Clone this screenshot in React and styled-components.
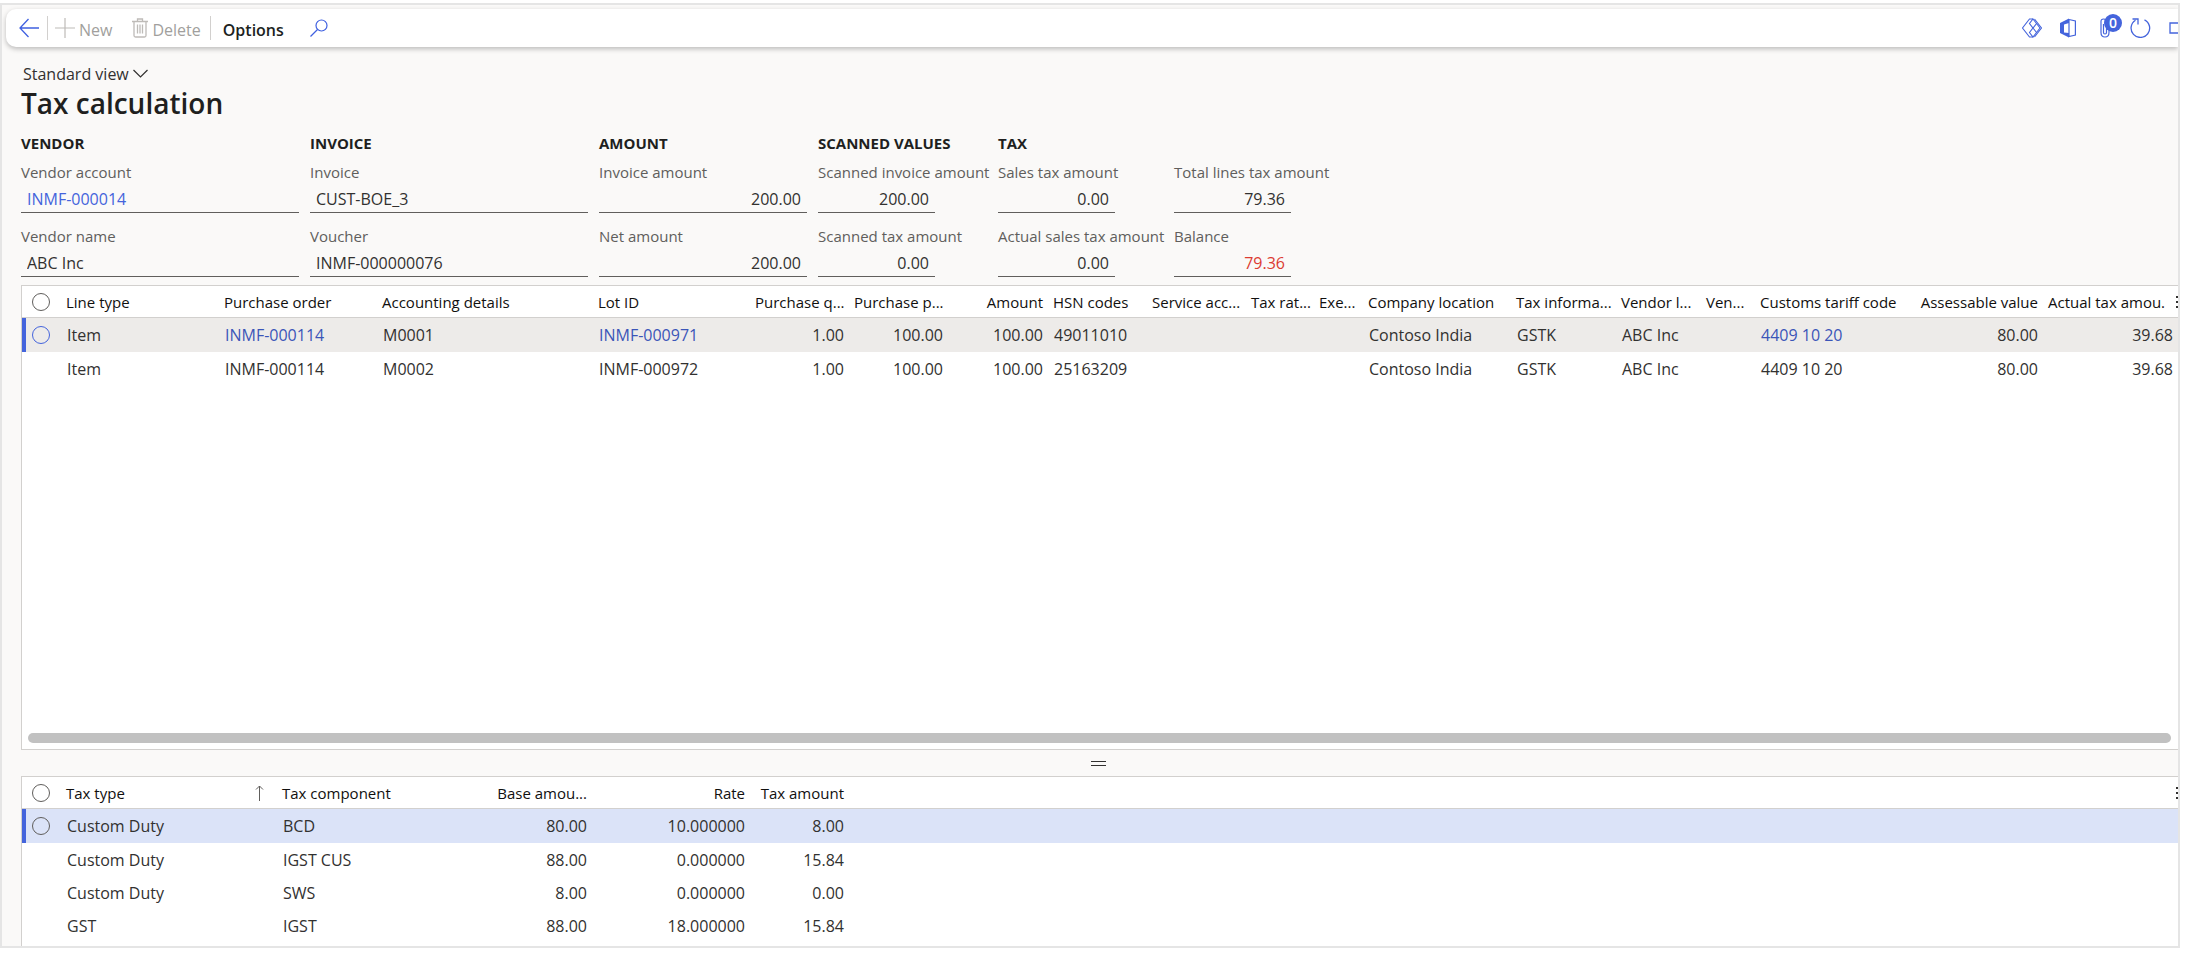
import { useState } from "react";
import styled, { createGlobalStyle, css } from "styled-components";

const GlobalStyle = createGlobalStyle`
  * {
    box-sizing: border-box;
  }

  html,
  body {
    margin: 0;
    background: #fff;
  }

  body,
  input,
  button {
    font-family: "Open Sans", "Noto Sans", sans-serif;
    font-size: 16px;
    color: #323130;
  }
`;

const Page = styled.div`
  height: 100vh;
  padding: 3px 6px 5px 0;
`;

const Frame = styled.div`
  display: flex;
  flex-direction: column;
  height: 100%;
  overflow: hidden;
  background: #faf9f8;
  border: 2px solid #e5e5e5;
`;

const Toolbar = styled.header`
  display: flex;
  align-items: center;
  justify-content: space-between;
  flex: none;
  height: 38px;
  margin: 4px 0 0 4px;
  padding-left: 12px;
  background: #fff;
  border-radius: 10px 0 0 10px;
  box-shadow: 0 2px 5px rgba(0, 0, 0, 0.25);
`;

const ToolbarGroup = styled.div`
  display: flex;
  align-items: center;
`;

const Divider = styled.span`
  width: 1px;
  height: 24px;
  background: #d2d0ce;
`;

const ToolButton = styled.button`
  display: flex;
  align-items: center;
  gap: 4px;
  height: 32px;
  padding: 4px ${(props) => props.$right || "6px"} 0
    ${(props) => props.$left || "6px"};
  border: 0;
  background: none;
  font-weight: ${(props) => (props.$strong ? 600 : 400)};
  color: ${(props) => (props.$strong ? "#201f1e" : "#3f60e0")};
  cursor: pointer;

  &:disabled {
    color: #a19f9d;
    cursor: default;
  }

  svg {
    display: block;
    flex: none;
    margin-bottom: 4px;
  }

  &:disabled svg {
    color: #bebbb8;
  }
`;

const StatusIcons = styled(ToolbarGroup)`
  gap: 18px;
`;

const IconButton = styled.button`
  position: relative;
  flex: none;
  padding: 0 ${(props) => (props.$badged ? "2px 0 6px" : "0")};
  border: 0;
  background: none;
  color: #4464dc;
  cursor: pointer;

  svg {
    display: block;
  }
`;

const Badge = styled.span`
  position: absolute;
  top: -4px;
  left: 10px;
  width: 18px;
  height: 18px;
  border-radius: 50%;
  background: #4464dc;
  color: #fff;
  font-size: 14px;
  font-weight: 600;
  line-height: 18px;
  text-align: center;
`;

const Content = styled.main`
  display: flex;
  flex: 1;
  flex-direction: column;
  min-height: 0;
  padding: 15px 0 0 19px;
`;

const ViewButton = styled.button`
  display: flex;
  align-items: center;
  align-self: flex-start;
  gap: 4px;
  height: 24px;
  padding: 0 2px;
  border: 0;
  background: none;
  cursor: pointer;
`;

const Title = styled.h1`
  margin: 0;
  font-size: 28px;
  font-weight: 600;
  line-height: 34px;
  color: #201f1e;
`;

const Summary = styled.div`
  display: flex;
  gap: 11px;
  margin-top: 12px;
`;

const Group = styled.section`
  flex: none;
  width: ${(props) => props.$width};
`;

const GroupTitle = styled.h2`
  margin: 0 0 7px;
  font-size: 15px;
  font-weight: 700;
  line-height: 22px;
  color: #201f1e;
`;

const Fields = styled.div`
  display: grid;
  grid-template-columns: ${(props) => (props.$split ? "165px 165px" : "100%")};
  column-gap: 11px;
  row-gap: 12px;
`;

const FieldBox = styled.div`
  display: flex;
  flex-direction: column;
  white-space: nowrap;
`;

const FieldLabel = styled.label`
  font-size: 15px;
  line-height: 22px;
  color: #605e5c;
`;

const FieldInput = styled.input`
  width: ${(props) => (props.$narrow ? "117px" : "100%")};
  height: 30px;
  padding: 2px 6px 0;
  border: 0;
  border-bottom: 1px solid #605e5c;
  background: none;
  text-align: ${(props) => (props.$right ? "right" : "left")};
  color: ${(props) => props.$color || "#323130"};
  outline: none;
`;

const GridPanel = styled.section`
  display: flex;
  flex-direction: column;
  flex: ${(props) => (props.$grow ? 1 : "none")};
  min-height: 0;
  margin-top: ${(props) => (props.$grow ? "8px" : "0")};
  padding-bottom: ${(props) => (props.$grow ? "0" : "4px")};
  overflow: hidden;
  background: #fff;
  border: 1px solid #d2d0ce;
  border-width: ${(props) => (props.$grow ? "1px 0 1px 1px" : "1px 0 0 1px")};
`;

const Table = styled.table`
  width: 100%;
  table-layout: fixed;
  border-collapse: separate;
  border-spacing: 0;
`;

const cell = css`
  padding: 0 5px;
  overflow: hidden;
  white-space: nowrap;
  text-align: ${(props) => (props.$right ? "right" : "left")};
`;

const HeadCell = styled.th`
  ${cell}
  height: 32px;
  border-bottom: 1px solid #d2d0ce;
  font-size: 15px;
  font-weight: 500;
  color: #11100f;
`;

const HeadInner = styled.div`
  display: flex;
  align-items: center;
  justify-content: space-between;
`;

const Cell = styled.td`
  ${cell}
  height: 33px;
  padding-left: 6px;

  a {
    color: #3b55b8;
    text-decoration: none;
  }
`;

const Row = styled.tr`
  height: ${(props) => (props.$fill ? "34px" : "33px")};
  background: ${(props) => props.$fill || "transparent"};

  td:first-child {
    box-shadow: ${(props) => (props.$fill ? "inset 4px 0 0 #4464dc" : "none")};
  }
`;

const SelectCell = styled.td`
  padding: 0 0 0 10px;
`;

const SelectHead = styled.th`
  padding: 0 0 0 10px;
  border-bottom: 1px solid #d2d0ce;
`;

const Round = styled.input`
  display: block;
  appearance: none;
  width: 18px;
  height: 18px;
  margin: 0;
  border: 1px solid ${(props) => props.$color || "#605e5c"};
  border-radius: 50%;

  &:checked {
    background: #4464dc;
  }
`;

const SortMark = styled.span`
  display: flex;
  margin-right: 8px;
`;

const MoreButton = styled.button`
  flex: none;
  width: 4px;
  height: 16px;
  margin: 0 -5px 0 auto;
  padding: 0;
  overflow: hidden;
  border: 0;
  background: none;

  svg {
    display: block;
  }
`;

const ScrollTrack = styled.div`
  margin: auto 7px 6px 6px;
`;

const ScrollThumb = styled.div`
  height: 10px;
  border-radius: 5px;
  background: #c1c1c1;
`;

const Splitter = styled.div`
  display: flex;
  align-items: center;
  justify-content: center;
  flex: none;
  height: 26px;
  padding-right: 3px;
`;

const SplitterHandle = styled.span`
  width: 15px;
  height: 5px;
  border: solid #323130;
  border-width: 1px 0;
`;

const BackIcon = () => (
  <svg width="20" height="20" fill="none" stroke="currentColor" strokeWidth="1.3">
    <path d="M9.5 1 1 10l8.5 9M1 10h19" />
  </svg>
);

const PlusIcon = () => (
  <svg width="20" height="20" fill="none" stroke="currentColor" strokeWidth="1.2">
    <path d="M10 0v20M0 10h20" />
  </svg>
);

const TrashIcon = () => (
  <svg width="16" height="20" fill="none" stroke="currentColor" strokeWidth="1.3">
    <path d="M0 3.5h16M5.5 3V1h5v2M2 3.5v14q0 1.5 1.5 1.5h9q1.5 0 1.5-1.5v-14M5.5 6.5v9M8 6.5v9M10.5 6.5v9" />
  </svg>
);

const SearchIcon = () => (
  <svg width="18" height="18" fill="none" stroke="currentColor" strokeWidth="1.2">
    <circle cx="11.5" cy="6.5" r="5.5" />
    <path d="M7.5 10.5.5 17.5" />
  </svg>
);

const ChevronIcon = () => (
  <svg width="15" height="10" fill="none" stroke="#323130" strokeWidth="1.2">
    <path d="m.5 1 7 7 7-7" />
  </svg>
);

const DiamondsIcon = () => (
  <svg width="20" height="20" fill="none" stroke="currentColor" strokeWidth="1.1">
    <path d="M11 1H7.5L.5 10l7 9H11M12.5 1l7 9-7 9" />
    <path d="m11 1 3.500 4.500L11 10 7.500 5.500ZM11 10l3.500 4.500L11 19l-3.500-4.500Z" />
    <path d="m14.500 5.500 3.500 4.500-3.500 4.500" />
  </svg>
);

const OfficeIcon = () => (
  <svg width="16" height="20">
    <path d="M0 5 9 .5V5L4 6.5v8L9 15v4.5L0 15Z" fill="currentColor" />
    <path d="M9 1.5 15.4 3v14L9 18.5V1.5" fill="none" stroke="currentColor" strokeWidth="1.2" />
  </svg>
);

const ClipIcon = () => (
  <svg width="10" height="20" fill="none" stroke="currentColor" strokeWidth="1.2">
    <path d="M3.5 6v8.5q0 1.5 1.5 1.5t1.5-1.5V3.5Q6.5 1 3.7 1T1 3.5v11Q1 19 5 19t4-4.5V5" />
  </svg>
);

const RefreshIcon = () => (
  <svg width="21" height="20" fill="none" stroke="currentColor" strokeWidth="1.3">
    <path d="M14.5 1.8A9.3 9.3 0 1 1 5.5 2.2M2.5 1H8v5.5" />
  </svg>
);

const WindowIcon = () => (
  <svg width="9" height="12" fill="none" stroke="currentColor" strokeWidth="1.3">
    <path d="M9 1H1v10h8" />
  </svg>
);

const SortIcon = () => (
  <svg width="9" height="16" fill="none" stroke="#605e5c">
    <path d="M4.5 16V1M1 4.5 4.5 1 8 4.5" />
  </svg>
);

const MoreIcon = () => (
  <svg width="6" height="16" fill="#323130">
    <rect x="2" y="2" width="2" height="2" />
    <rect x="2" y="7" width="2" height="2" />
    <rect x="2" y="12" width="2" height="2" />
  </svg>
);

const groups = [
  {
    title: "VENDOR",
    width: "278px",
    fields: [
      { label: "Vendor account", value: "INMF-000014", color: "#4464dc" },
      { label: "Vendor name", value: "ABC Inc" },
    ],
  },
  {
    title: "INVOICE",
    width: "278px",
    fields: [
      { label: "Invoice", value: "CUST-BOE_3" },
      { label: "Voucher", value: "INMF-000000076" },
    ],
  },
  {
    title: "AMOUNT",
    width: "208px",
    fields: [
      { label: "Invoice amount", value: "200.00", right: true },
      { label: "Net amount", value: "200.00", right: true },
    ],
  },
  {
    title: "SCANNED VALUES",
    width: "169px",
    narrow: true,
    fields: [
      { label: "Scanned invoice amount", value: "200.00", right: true },
      { label: "Scanned tax amount", value: "0.00", right: true },
    ],
  },
  {
    title: "TAX",
    width: "341px",
    narrow: true,
    split: true,
    fields: [
      { label: "Sales tax amount", value: "0.00", right: true },
      { label: "Total lines tax amount", value: "79.36", right: true },
      { label: "Actual sales tax amount", value: "0.00", right: true },
      { label: "Balance", value: "79.36", right: true, color: "#dc3c32" },
    ],
  },
];

const lineColumns = [
  { title: "Line type", width: 158 },
  { title: "Purchase order", width: 158 },
  { title: "Accounting details", width: 216 },
  { title: "Lot ID", width: 157 },
  { title: "Purchase q...", width: 99, right: true },
  { title: "Purchase p...", width: 99, right: true },
  { title: "Amount", width: 100, right: true },
  { title: "HSN codes", width: 99 },
  { title: "Service acc...", width: 99 },
  { title: "Tax rat...", width: 68 },
  { title: "Exe...", width: 49 },
  { title: "Company location", width: 148 },
  { title: "Tax informa...", width: 105 },
  { title: "Vendor l...", width: 85 },
  { title: "Ven...", width: 54 },
  { title: "Customs tariff code", width: 158 },
  { title: "Assessable value", width: 130, right: true },
  { title: "Actual tax amou.", right: true, more: true },
];

const lines = [
  ["Item", "INMF-000114", "M0001", "INMF-000971", "1.00", "100.00", "100.00", "49011010", "", "", "", "Contoso India", "GSTK", "ABC Inc", "", "4409 10 20", "80.00", "39.68"],
  ["Item", "INMF-000114", "M0002", "INMF-000972", "1.00", "100.00", "100.00", "25163209", "", "", "", "Contoso India", "GSTK", "ABC Inc", "", "4409 10 20", "80.00", "39.68"],
];

const taxColumns = [
  { title: "Tax type", width: 216, sorted: true },
  { title: "Tax component", width: 157 },
  { title: "Base amou...", width: 158, right: true },
  { title: "Rate", width: 158, right: true },
  { title: "Tax amount", width: 99, right: true },
  { title: "", more: true },
];

const taxes = [
  ["Custom Duty", "BCD", "80.00", "10.000000", "8.00", ""],
  ["Custom Duty", "IGST CUS", "88.00", "0.000000", "15.84", ""],
  ["Custom Duty", "SWS", "8.00", "0.000000", "0.00", ""],
  ["GST", "IGST", "88.00", "18.000000", "15.84", ""],
];

function Field({ label, value, right, color, narrow }) {
  const [text, setText] = useState(value);
  const id = label.toLowerCase().replaceAll(" ", "-");

  return (
    <FieldBox>
      <FieldLabel htmlFor={id}>{label}</FieldLabel>
      <FieldInput
        id={id}
        value={text}
        onChange={(e) => setText(e.target.value)}
        $right={right}
        $color={color}
        $narrow={narrow}
      />
    </FieldBox>
  );
}

function DataGrid({ label, columns, rows, links = [], fill, ring }) {
  return (
    <Table aria-label={label}>
      <colgroup>
        <col width="39" />
        {columns.map((column) => (
          <col key={column.title} width={column.width} />
        ))}
      </colgroup>
      <thead>
        <tr>
          <SelectHead>
            <Round type="checkbox" aria-label="Select all rows" />
          </SelectHead>
          {columns.map((column) => (
            <HeadCell key={column.title} $right={column.right}>
              {column.sorted || column.more ? (
                <HeadInner>
                  {column.title}
                  {column.sorted && (
                    <SortMark>
                      <SortIcon />
                    </SortMark>
                  )}
                  {column.more && (
                    <MoreButton aria-label="Grid options">
                      <MoreIcon />
                    </MoreButton>
                  )}
                </HeadInner>
              ) : (
                column.title
              )}
            </HeadCell>
          ))}
        </tr>
      </thead>
      <tbody>
        {rows.map((row, rowIndex) => (
          <Row key={rowIndex} $fill={rowIndex === 0 && fill}>
            <SelectCell>
              {rowIndex === 0 && (
                <Round type="checkbox" aria-label="Select row" $color={ring} />
              )}
            </SelectCell>
            {row.map((value, i) => (
              <Cell key={i} $right={columns[i].right}>
                {rowIndex === 0 && links.includes(i) ? <a href="#">{value}</a> : value}
              </Cell>
            ))}
          </Row>
        ))}
      </tbody>
    </Table>
  );
}

const App = () => {
  return (
    <Page>
      <GlobalStyle />
      <Frame>
        <Toolbar>
          <ToolbarGroup>
            <ToolButton $left="1px" $right="8px" aria-label="Back">
              <BackIcon />
            </ToolButton>
            <Divider />
            <ToolButton disabled $left="7px">
              <PlusIcon />
              New
            </ToolButton>
            <ToolButton disabled $left="14px" $right="9px">
              <TrashIcon />
              Delete
            </ToolButton>
            <Divider />
            <ToolButton $strong $left="12px" $right="12px">
              Options
            </ToolButton>
            <ToolButton $left="14px" $right="14px" aria-label="Search">
              <SearchIcon />
            </ToolButton>
          </ToolbarGroup>
          <StatusIcons>
            <IconButton aria-label="Power Apps">
              <DiamondsIcon />
            </IconButton>
            <IconButton aria-label="Open in Microsoft Office">
              <OfficeIcon />
            </IconButton>
            <IconButton $badged aria-label="Attachments">
              <ClipIcon />
              <Badge>0</Badge>
            </IconButton>
            <IconButton aria-label="Refresh">
              <RefreshIcon />
            </IconButton>
            <IconButton aria-label="Open in new window">
              <WindowIcon />
            </IconButton>
          </StatusIcons>
        </Toolbar>

        <Content>
          <ViewButton>
            Standard view
            <ChevronIcon />
          </ViewButton>
          <Title>Tax calculation</Title>

          <Summary>
            {groups.map((group) => (
              <Group key={group.title} $width={group.width}>
                <GroupTitle>{group.title}</GroupTitle>
                <Fields $split={group.split}>
                  {group.fields.map((field) => (
                    <Field key={field.label} narrow={group.narrow} {...field} />
                  ))}
                </Fields>
              </Group>
            ))}
          </Summary>

          <GridPanel $grow>
            <DataGrid
              label="Lines"
              columns={lineColumns}
              rows={lines}
              links={[1, 3, 15]}
              fill="#edebe9"
              ring="#4464dc"
            />
            <ScrollTrack>
              <ScrollThumb />
            </ScrollTrack>
          </GridPanel>

          <Splitter>
            <SplitterHandle />
          </Splitter>

          <GridPanel>
            <DataGrid label="Taxes" columns={taxColumns} rows={taxes} fill="#dbe3f8" />
          </GridPanel>
        </Content>
      </Frame>
    </Page>
  );
};

export default App;
